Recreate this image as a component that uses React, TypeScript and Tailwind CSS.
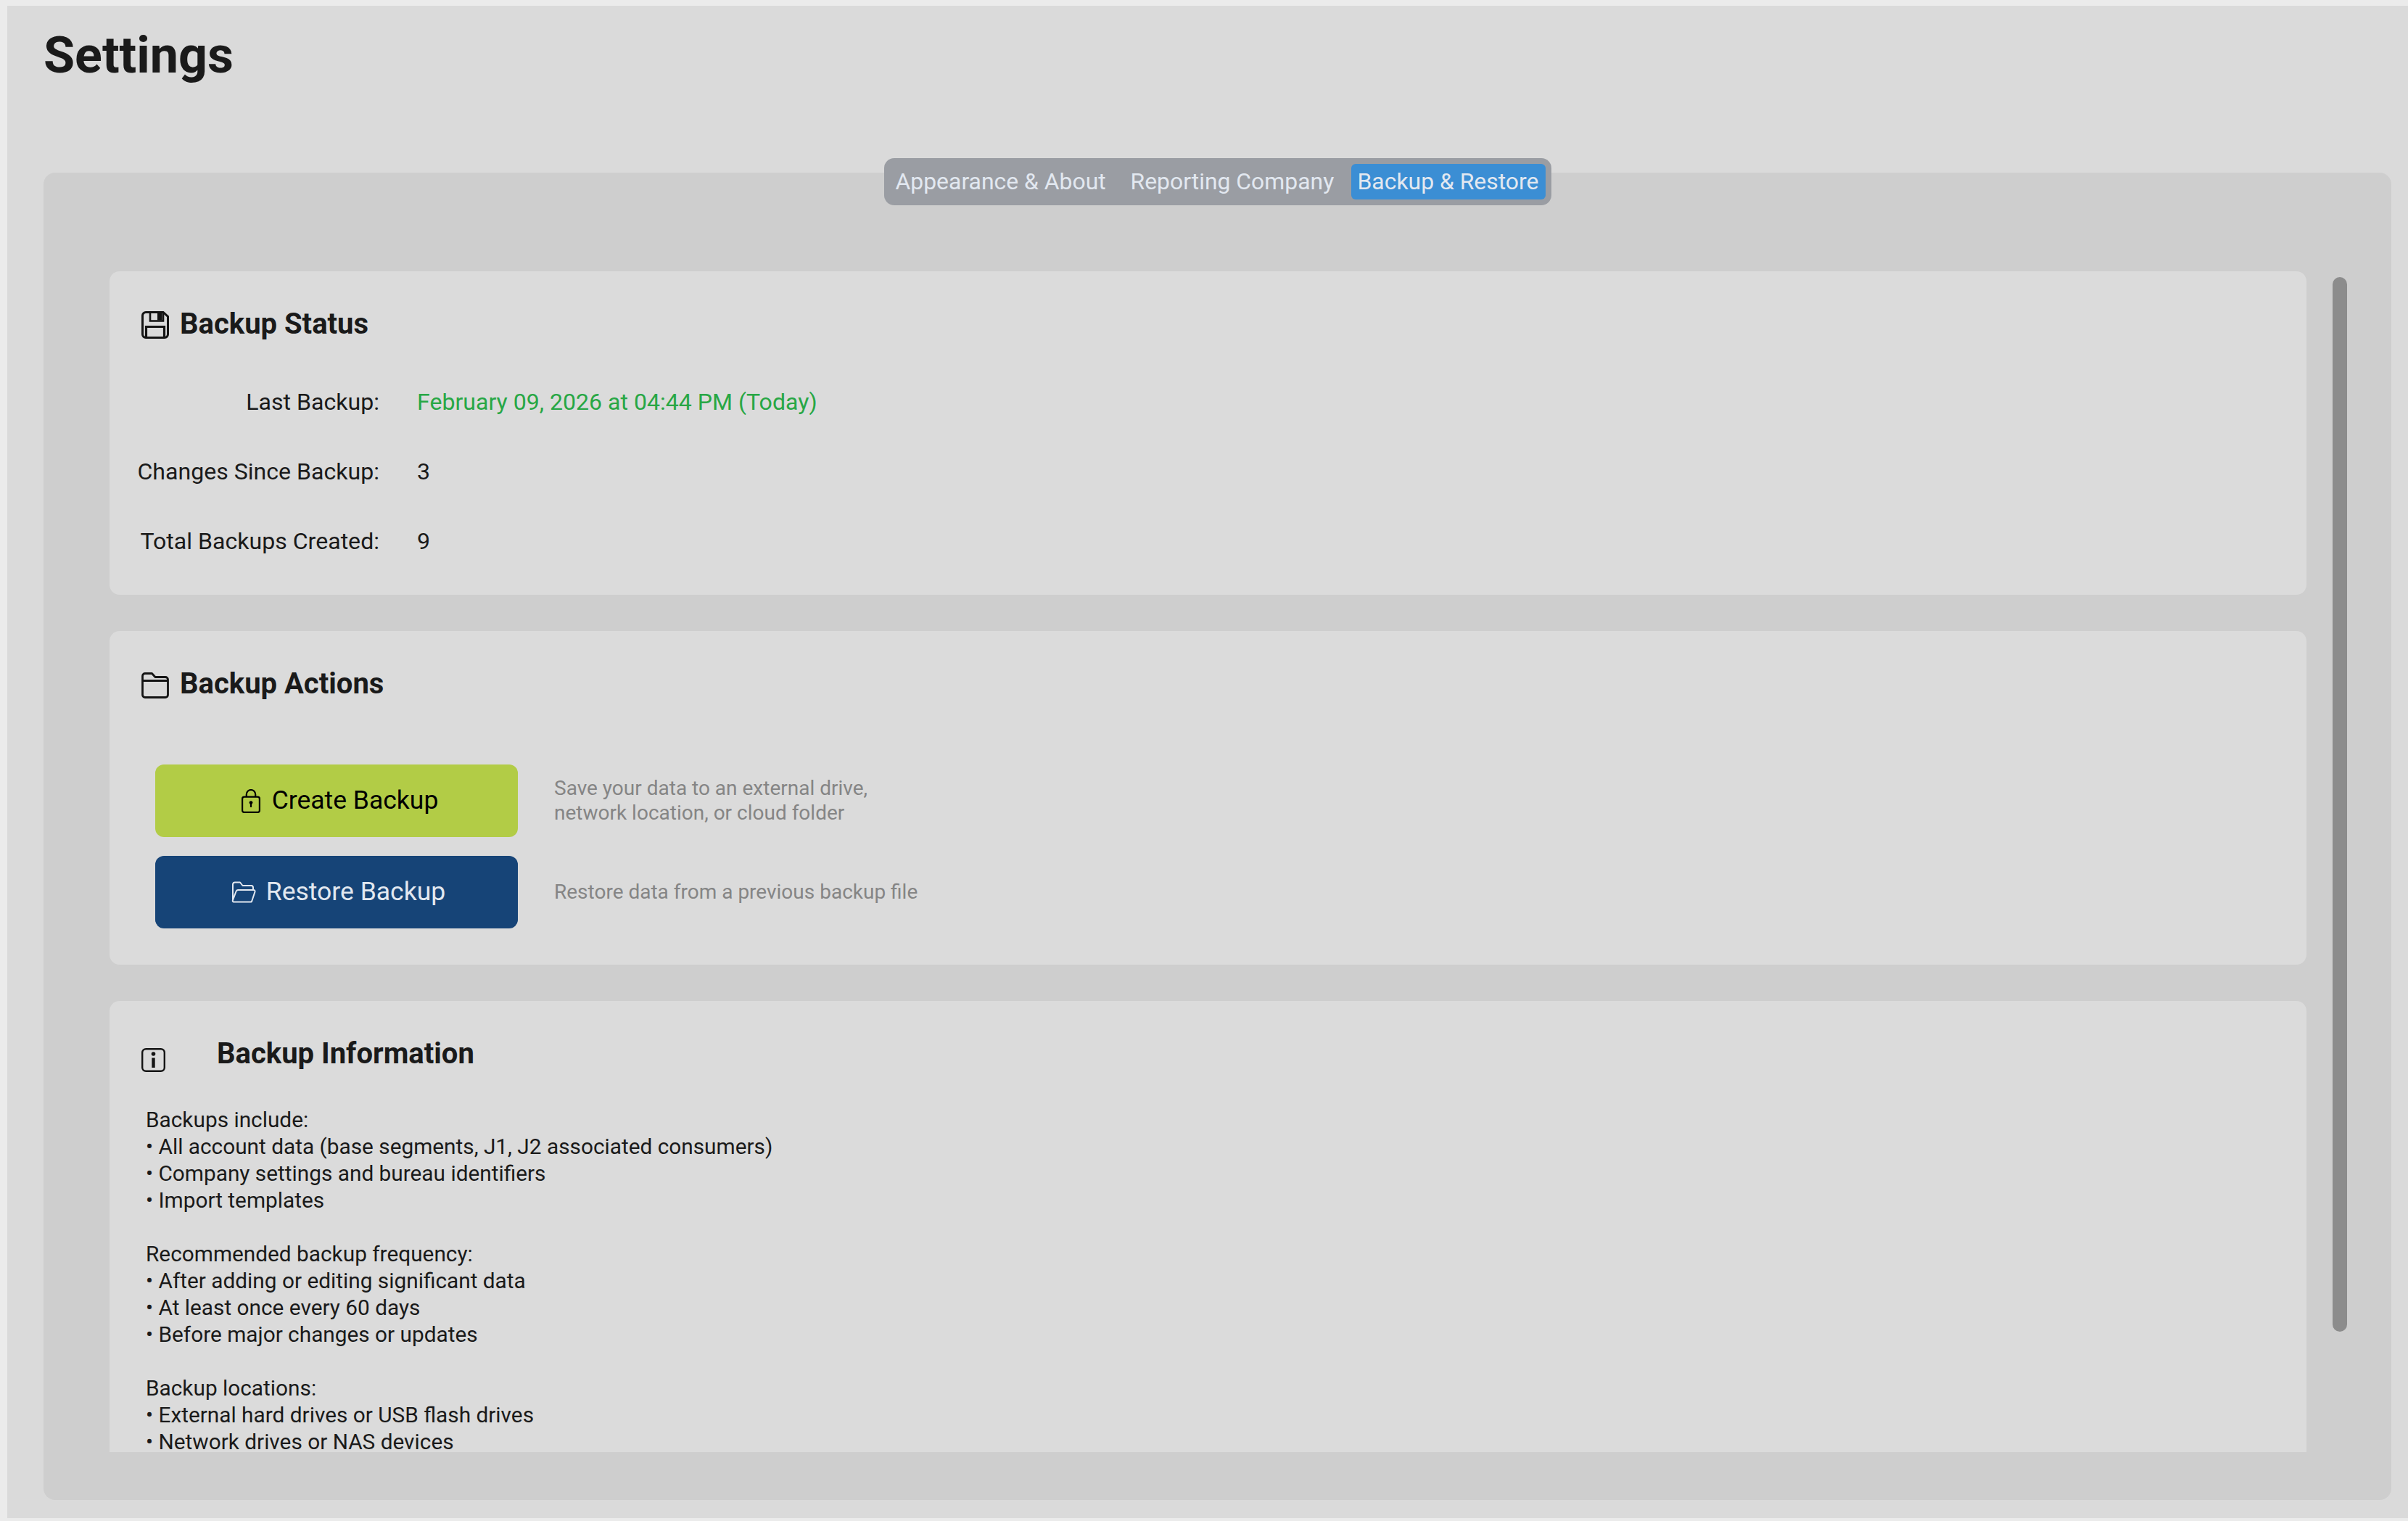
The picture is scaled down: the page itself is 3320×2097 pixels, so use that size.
import React from "react";

const font = { fontFamily: "Roboto, sans-serif" };

function FloppyIcon() {
  return (
    <svg width="38" height="38" viewBox="0 0 38 38" fill="none" stroke="#141414" strokeWidth="3" className="mt-[2px] shrink-0">
      <path d="M6 1.5H30L36.5 7.5V32a4.5 4.5 0 0 1-4.5 4.5H6A4.5 4.5 0 0 1 1.5 32V6A4.5 4.5 0 0 1 6 1.5Z" />
      <path d="M12 1.5V13.5H30V1.5" strokeWidth="2.6" />
      <path d="M22 2H28.5V12.5H22Z" fill="#141414" stroke="none" />
      <path d="M6.5 36V21.5H31.5V36" strokeWidth="3.2" />
    </svg>
  );
}

function FolderIcon() {
  return (
    <svg width="38" height="36" viewBox="0 0 38 36" fill="none" stroke="#141414" strokeWidth="2.8" strokeLinejoin="round" className="mt-[3px] shrink-0">
      <path d="M5 1.5H14.5L19 6.5H33A3.5 3.5 0 0 1 36.5 10V31A3.5 3.5 0 0 1 33 34.5H5A3.5 3.5 0 0 1 1.5 31V5A3.5 3.5 0 0 1 5 1.5Z" />
      <path d="M1.5 11.5H36.5" />
    </svg>
  );
}

function LockIcon() {
  return (
    <svg width="26" height="33" viewBox="0 0 26 33" fill="none" stroke="#000000" strokeWidth="2.2" className="shrink-0">
      <rect x="1.1" y="10.6" width="23.8" height="21.2" rx="2.6" />
      <path d="M6.8 10.6V7.2A6.2 6.2 0 0 1 19.2 7.2V10.6" />
      <circle cx="13" cy="18.6" r="2.4" fill="#000000" stroke="none" />
      <path d="M13 19V25" strokeWidth="2.2" />
    </svg>
  );
}

function OpenFolderIcon() {
  return (
    <svg width="34" height="30" viewBox="0 0 34 30" fill="none" stroke="#e2e8f0" strokeWidth="2" strokeLinejoin="round" className="shrink-0">
      <path d="M2 26V4A3 3 0 0 1 5 1.5H12L15.5 6H28A3 3 0 0 1 30 9V12" />
      <path d="M9 12H30.5A2 2 0 0 1 32.5 14.5L28.5 26.5A2.4 2.4 0 0 1 26 28.5H3.5A1.6 1.6 0 0 1 2 26L6.5 14A3 3 0 0 1 9 12Z" />
    </svg>
  );
}

function InfoIcon() {
  return (
    <svg width="33" height="33" viewBox="0 0 33 33" fill="none" stroke="#141414" strokeWidth="2.4" className="shrink-0">
      <rect x="1.2" y="1.2" width="30.6" height="30.6" rx="5" />
      <circle cx="16.5" cy="8" r="2.8" fill="#141414" stroke="none" />
      <path d="M16.5 13.5V27" strokeWidth="4.4" />
    </svg>
  );
}

function StatusRow({ label, value, green }: { label: string; value: string; green?: boolean }) {
  return (
    <div className="flex h-[46px] items-center gap-[52px] pl-[38px]">
      <div className="w-[334px] text-right text-[32.1px] text-[#1a1a1a]">{label}</div>
      <div className={green ? "text-[32.1px] text-[#28a745]" : "text-[32.1px] text-[#1a1a1a]"}>{value}</div>
    </div>
  );
}

const info = `Backups include:
• All account data (base segments, J1, J2 associated consumers)
• Company settings and bureau identifiers
• Import templates

Recommended backup frequency:
• After adding or editing significant data
• At least once every 60 days
• Before major changes or updates

Backup locations:
• External hard drives or USB flash drives
• Network drives or NAS devices`;

export default function App() {
  return (
    <div className="h-[2097px] w-[3320px] overflow-hidden bg-[#ebebeb] pb-1 pl-[10px] pt-2" style={font}>
      <div className="flex h-full flex-col bg-[#dadada]">
        <div className="flex h-[230px] shrink-0 items-start pl-[50px] pt-[28px]">
          <h1 className="text-[70px] font-bold leading-[80px] text-[#1a1a1a]">Settings</h1>
        </div>
        <div className="relative ml-[50px] mr-[23px] h-[1830px] shrink-0 rounded-[16px] bg-[#cecece] pl-[91px] pr-[117px] pt-[136px]">
          <div className="absolute left-1/2 top-[-20px] flex h-[65px] w-[920px] -translate-x-1/2 items-center rounded-[14px] bg-[#9a9da3] pl-[16px] text-[31.9px] text-[#e2e8f0]">
            <span className="w-[324px]">Appearance &amp; About</span>
            <span className="w-[304px]">Reporting Company</span>
            <span className="flex h-[49px] w-[268px] items-center justify-center rounded-[6px] bg-[#3b8ed4]">Backup &amp; Restore</span>
          </div>
          <div className="absolute left-[3156px] top-[144px] h-[1454px] w-[20px] rounded-[10px] bg-[#8c8c8c]" />

          <div className="flex h-[1628px] flex-col gap-[50px] overflow-hidden">
            <section className="h-[446px] shrink-0 rounded-[14px] bg-[#dbdbdb] pt-[50px]">
              <div className="flex h-[46px] items-center gap-[15px] pl-[44px]">
                <FloppyIcon />
                <h2 className="text-[40px] font-bold text-[#1a1a1a]">Backup Status</h2>
              </div>
              <div className="mt-[61px] flex flex-col gap-[50px]">
                <StatusRow label="Last Backup:" value="February 09, 2026 at 04:44 PM (Today)" green />
                <StatusRow label="Changes Since Backup:" value="3" />
                <StatusRow label="Total Backups Created:" value="9" />
              </div>
            </section>

            <section className="h-[460px] shrink-0 rounded-[14px] bg-[#dbdbdb] pt-[50px]">
              <div className="flex h-[46px] items-center gap-[15px] pl-[44px]">
                <FolderIcon />
                <h2 className="text-[40px] font-bold text-[#1a1a1a]">Backup Actions</h2>
              </div>
              <div className="ml-[63px] mt-[88px] flex flex-col gap-[26px]">
                <div className="flex items-center gap-[50px]">
                  <button className="flex h-[100px] w-[500px] items-center justify-center gap-[16px] rounded-[12px] bg-[#b2cc46] pl-[9px] text-[35.5px] text-black">
                    <LockIcon />
                    Create Backup
                  </button>
                  <p className="text-[28px] leading-[34px] text-[#858585]">
                    Save your data to an external drive,
                    <br />
                    network location, or cloud folder
                  </p>
                </div>
                <div className="flex items-center gap-[50px]">
                  <button className="flex h-[100px] w-[500px] items-center justify-center gap-[14px] rounded-[12px] bg-[#164477] pl-[5px] text-[35.5px] text-[#e2e8f0]">
                    <OpenFolderIcon />
                    Restore Backup
                  </button>
                  <p className="text-[28px] leading-[34px] text-[#858585]">Restore data from a previous backup file</p>
                </div>
              </div>
            </section>

            <section className="h-[622px] shrink-0 overflow-hidden rounded-t-[14px] bg-[#dbdbdb] pt-[50px]">
              <div className="flex h-[46px] items-start pl-[44px]">
                <div className="mt-[15px] w-[104px]">
                  <InfoIcon />
                </div>
                <h2 className="text-[40px] font-bold leading-[46px] text-[#1a1a1a]">Backup Information</h2>
              </div>
              <p className="ml-[50px] mt-[49px] whitespace-pre-line text-[29.8px] leading-[37px] text-[#1a1a1a]">{info}</p>
            </section>
          </div>
        </div>
      </div>
    </div>
  );
}
